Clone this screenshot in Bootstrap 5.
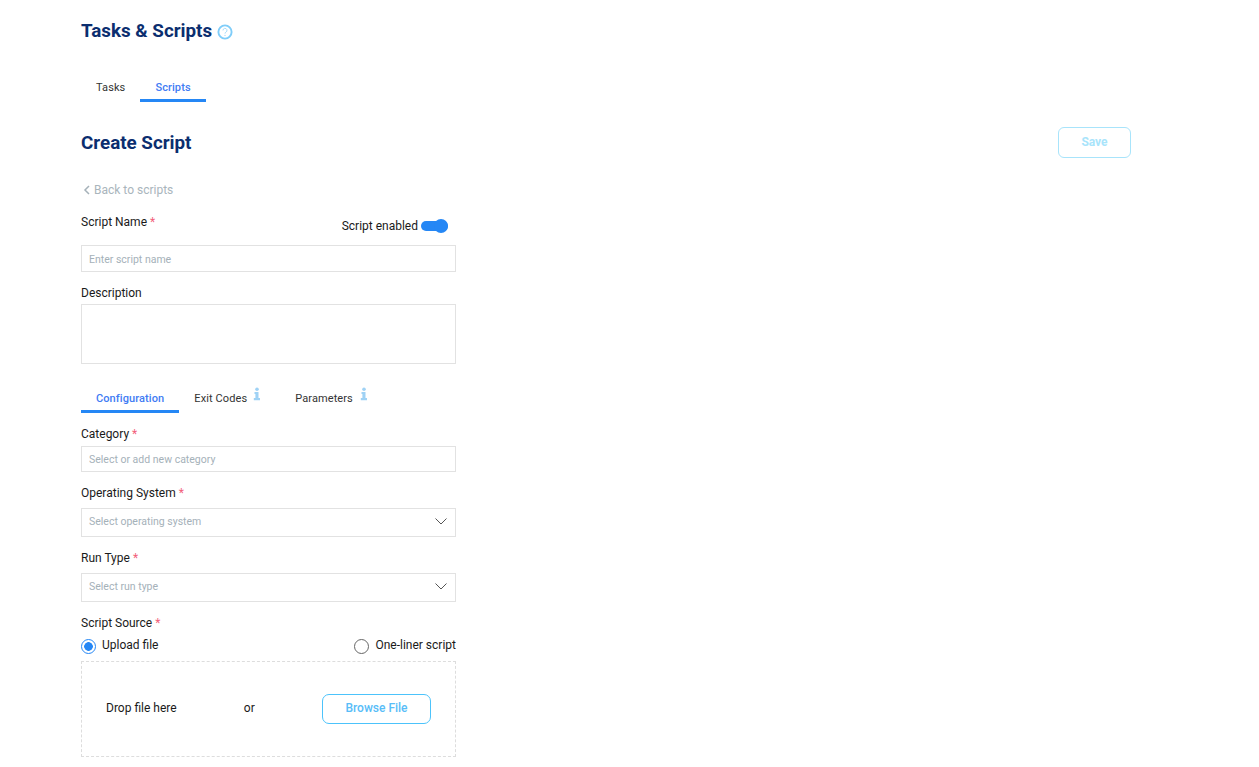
<!DOCTYPE html>
<html lang="en">
<head>
<meta charset="utf-8">
<title>Create Script</title>
<link href="https://cdn.jsdelivr.net/npm/bootstrap@5.3.0/dist/css/bootstrap.min.css" rel="stylesheet">
<style>
html,body{height:767px;overflow:hidden;background:#fff}
body{font-family:Roboto,"Liberation Sans",sans-serif;font-size:12px;color:#1a1a1a}
.page-wrap{padding:21px 128px 0 81px}
.page-title{font-size:18.8px;font-weight:700;color:#0b2e6f;line-height:21px;margin:0;display:flex;align-items:center;gap:5px}
.tab-strip{display:flex;margin:0;padding:0;list-style:none}
.tab-item{font-size:11px;font-weight:400;line-height:13px;color:#333;padding:0 15px 5px;border-bottom:3px solid transparent;display:flex;letter-spacing:.1px}
.tab-item.is-on{color:#3f7cf4;border-bottom-color:#2587f5;font-weight:500;letter-spacing:.1px}
.top-tabs{margin-top:39px}
.head-row{display:flex;justify-content:space-between;align-items:flex-start;margin-top:25px}
.sub-title{font-size:18.8px;font-weight:700;color:#0b2e6f;line-height:24px;margin:4px 0 0}
.save-btn{width:73px;height:31px;border:1px solid #a8e4fb;border-radius:6px;background:#fff;color:#a8e4fb;font-size:12px;font-weight:700;padding:0 0 2px}
.form-col{width:375px}
.back-link{display:flex;align-items:center;gap:4px;font-size:12px;color:#a9b5bc;line-height:14px;margin-top:25px;padding-left:2px}
.name-row{display:flex;justify-content:space-between;margin-top:18px;height:30px}
.fld-label{display:block;font-size:12px;line-height:14px;color:#1a1a1a;margin:0}
.req{color:#f2607a}
.toggle-wrap{display:flex;align-items:center;gap:3px;margin-right:8px;margin-top:2px;height:18px;line-height:14px}
.tgl{position:relative;display:block;width:27px;height:10px;border-radius:5px;background:#2587f5}
.tgl::after{content:"";position:absolute;right:0;top:-2px;width:14px;height:14px;border-radius:50%;background:#2587f5}
.fld{display:flex;align-items:center;width:100%;border:1px solid #e2e2e2;background:#fff;font-size:10.5px;color:#a5b1b9;padding:0 7px;border-radius:0}
.fld::placeholder{color:#a5b1b9;opacity:1}
.h-27{height:27px;padding-top:1px}
.h-26{height:26px}
.h-29{height:29px;justify-content:space-between;padding:0 8px 2px 7px}
.desc-box{display:block;height:60px;resize:none}
.m-lab{margin-top:14px;margin-bottom:4px}
.m-cat{margin-top:14px;margin-bottom:5px}
.m-sel{margin-top:14px;margin-bottom:8px}
.m-src{margin-top:14px}
.inner-tabs{margin-top:28px;align-items:flex-end}
.inner-tabs .tab-item{position:relative}
.info-mark{position:absolute;top:-5px;width:8px;height:14px}
.gap-w{padding-right:33px}
.radio-row{display:flex;justify-content:space-between;margin-top:8px;margin-bottom:5px;height:18px}
.radio-opt{display:flex;align-items:flex-start;gap:6px;line-height:14px;color:#1a1a1a}
.rad{display:block;width:15px;height:15px;border-radius:50%;border:1px solid #666;margin-top:1px;flex:none;background:#fff}
.rad.is-on{border-color:#2587f5;background:radial-gradient(circle,#2587f5 0 4px,#fff 4.6px)}
.drop-box{height:96px;border:1px dashed #ddd;display:flex;align-items:center;justify-content:space-between;padding:0 24px;line-height:14px}
.drop-box span{padding-bottom:2px}
.browse-btn{width:109px;height:30px;border:1px solid #4cc3fb;border-radius:7px;background:#fff;color:#58bdf8;font-size:12px;font-weight:500;padding:0 0 2px}
</style>
</head>
<body>
<div class="page-wrap">
  <h1 class="page-title">Tasks &amp; Scripts
    <svg width="16" height="16" viewBox="0 0 16 16" fill="none"><circle cx="8" cy="8" r="6.600" stroke="#7fcdf9" stroke-width="1.900"/><path d="M6 6.400a2 2 0 1 1 3 1.700c-.7.400-1 .8-1 1.500" stroke="#a8dcfb" stroke-width="1"/><circle cx="8" cy="11.400" r=".7" fill="#a8dcfb"/></svg>
  </h1>
  <ul class="tab-strip top-tabs">
    <li class="tab-item">Tasks</li>
    <li class="tab-item is-on">Scripts</li>
  </ul>
  <div class="head-row">
    <h2 class="sub-title">Create Script</h2>
    <button class="save-btn" type="button">Save</button>
  </div>
  <div class="form-col">
    <div class="back-link">
      <svg width="7" height="10" viewBox="0 0 7 10" fill="none"><path d="M6 1 2 5l4 4" stroke="#a5b1b9" stroke-width="1.500"/></svg>
      Back to scripts
    </div>
    <div class="name-row">
      <label class="fld-label">Script Name <span class="req">*</span></label>
      <div class="toggle-wrap"><span>Script enabled</span><span class="tgl"></span></div>
    </div>
    <input class="fld h-27" type="text" placeholder="Enter script name">
    <label class="fld-label m-lab">Description</label>
    <textarea class="fld desc-box"></textarea>

    <ul class="tab-strip inner-tabs">
      <li class="tab-item is-on">Configuration</li>
      <li class="tab-item gap-w">Exit Codes
        <svg class="info-mark" style="left:74px" viewBox="0 0 8 14"><circle cx="4" cy="2.200" r="1.800" fill="#9fd2f5"/><path d="M1.500 5h4v6h1.500v2.200H.8V11h1.600V7H1.500z" fill="#9fd2f5"/></svg>
      </li>
      <li class="tab-item">Parameters
        <svg class="info-mark" style="left:80px" viewBox="0 0 8 14"><circle cx="4" cy="2.200" r="1.800" fill="#9fd2f5"/><path d="M1.500 5h4v6h1.500v2.200H.8V11h1.600V7H1.500z" fill="#9fd2f5"/></svg>
      </li>
    </ul>

    <label class="fld-label m-cat">Category <span class="req">*</span></label>
    <input class="fld h-26" type="text" placeholder="Select or add new category">
    <label class="fld-label m-sel">Operating System <span class="req">*</span></label>
    <div class="fld h-29"><span>Select operating system</span>
      <svg width="12" height="7" viewBox="0 0 12 7" fill="none"><path d="M.5.5 6 6l5.500-5.500" stroke="#555" stroke-width="1"/></svg></div>
    <label class="fld-label m-sel">Run Type <span class="req">*</span></label>
    <div class="fld h-29"><span>Select run type</span>
      <svg width="12" height="7" viewBox="0 0 12 7" fill="none"><path d="M.5.5 6 6l5.500-5.500" stroke="#555" stroke-width="1"/></svg></div>
    <label class="fld-label m-src">Script Source <span class="req">*</span></label>
    <div class="radio-row">
      <div class="radio-opt"><span class="rad is-on"></span><span>Upload file</span></div>
      <div class="radio-opt"><span class="rad"></span><span>One-liner script</span></div>
    </div>
    <div class="drop-box">
      <span>Drop file here</span><span>or</span>
      <button class="browse-btn" type="button">Browse File</button>
    </div>
  </div>
</div>
<script src="https://cdn.jsdelivr.net/npm/bootstrap@5.3.0/dist/js/bootstrap.bundle.min.js"></script>
</body>
</html>
